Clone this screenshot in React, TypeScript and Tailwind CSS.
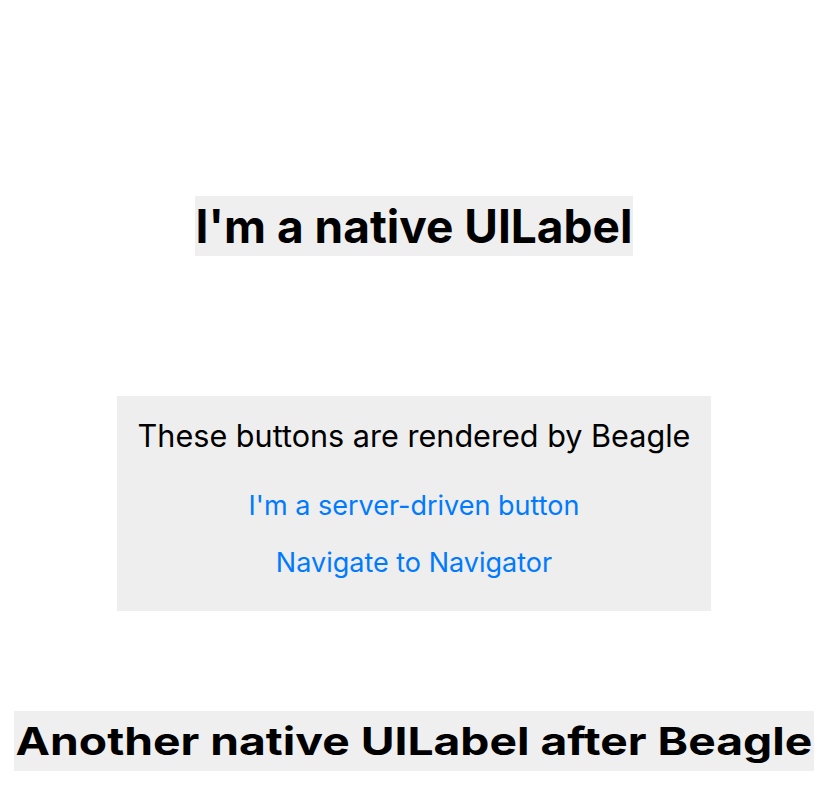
import React from "react";

export default function App() {
  return (
    <div
      className="w-[828px] h-[800px] bg-white flex flex-col items-center overflow-hidden"
      style={{ fontFamily: "Inter, 'Noto Sans', sans-serif" }}
    >
      <div className="h-[196px]" />
      <div className="h-[60px] bg-[#efefef] flex items-center px-[1px] text-[46px] font-bold text-black leading-none">
        I'm a native UILabel
      </div>
      <div className="h-[140px]" />
      <div className="w-[594px] h-[215px] bg-[#eeeeee] flex flex-col items-center pt-[23px]">
        <div className="h-[34px] leading-[34px] text-[30.6px] text-black">These buttons are rendered by Beagle</div>
        <div className="h-[34px] mt-[36px] leading-[34px] text-[27px] text-[#007aff]">I'm a server-driven button</div>
        <div className="h-[34px] mt-[23px] leading-[34px] text-[27px] text-[#007aff]">Navigate to Navigator</div>
      </div>
      <div className="h-[100px]" />
      <div className="w-[800px] h-[60px] bg-[#efefef] flex items-center justify-center overflow-hidden">
        <span className="inline-block scale-x-[1.2] text-[38.5px] font-bold text-black leading-none whitespace-nowrap">
          Another native UILabel after Beagle
        </span>
      </div>
    </div>
  );
}
